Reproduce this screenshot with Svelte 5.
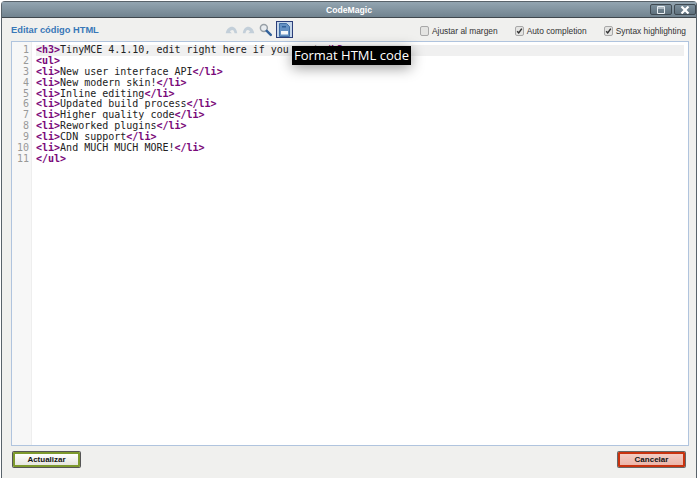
<script>
  const lines = [
    [['t', '<h3>'], ['x', 'TinyMCE 4.1.10, edit right here if you want'], ['t', '</h3>']],
    [['t', '<ul>']],
    [['t', '<li>'], ['x', 'New user interface API'], ['t', '</li>']],
    [['t', '<li>'], ['x', 'New modern skin!'], ['t', '</li>']],
    [['t', '<li>'], ['x', 'Inline editing'], ['t', '</li>']],
    [['t', '<li>'], ['x', 'Updated build process'], ['t', '</li>']],
    [['t', '<li>'], ['x', 'Higher quality code'], ['t', '</li>']],
    [['t', '<li>'], ['x', 'Reworked plugins'], ['t', '</li>']],
    [['t', '<li>'], ['x', 'CDN support'], ['t', '</li>']],
    [['t', '<li>'], ['x', 'And MUCH MUCH MORE!'], ['t', '</li>']],
    [['t', '</ul>']]
  ];

  const options = [
    { label: 'Ajustar al margen', checked: false },
    { label: 'Auto completion', checked: true },
    { label: 'Syntax highlighting', checked: true }
  ];
</script>

<div class="window">
  <header class="titlebar">
    <span class="title">CodeMagic</span>
    <div class="controls">
      <button class="ctl" aria-label="Maximize">
        <svg width="8" height="8" viewBox="0 0 8 8"><path d="M0.500 0.500h7v7h-7z M0.500 2h7" fill="none" stroke="#e8eef2" stroke-width="1"/></svg>
      </button>
      <button class="ctl" aria-label="Close">
        <svg width="10" height="8" viewBox="0 0 10 8"><path d="M1.500 0.500l7 7M8.500 0.500l-7 7" fill="none" stroke="#fff" stroke-width="2.200"/></svg>
      </button>
    </div>
  </header>

  <div class="body">
    <div class="toolbar">
      <h2>Editar código HTML</h2>
      <div class="icons">
        <svg width="13" height="11" viewBox="0 0 17 14"><path d="M1 12C2 6 6 3 10 3.500C13 4 15.500 7 16 12L12.500 12C12 9 11 7.500 9.500 7.500C8 7.500 7 8.500 6.500 9.500L9 12Z" fill="#c3cfd9"/></svg>
        <svg width="13" height="11" viewBox="0 0 17 14"><path d="M16 12C15 6 11 3 7 3.500C4 4 1.500 7 1 12L4.500 12C5 9 6 7.500 7.500 7.500C9 7.500 10 8.500 10.500 9.500L8 12Z" fill="#c3cfd9"/></svg>
        <svg width="13" height="14" viewBox="0 0 16 17">
          <circle cx="6" cy="6" r="4.300" fill="#e8ecef" stroke="#98a0a6" stroke-width="1.800"/>
          <path d="M9.500 9.500L14.500 14.500" stroke="#34639c" stroke-width="3" stroke-linecap="round"/>
        </svg>
        <span class="active">
          <svg width="11" height="14" viewBox="0 0 11 14">
            <path d="M0.500 0.500H7.500L10.500 3.500V13.500H0.500Z" fill="#6490c2" stroke="#3f6ea5"/>
            <rect x="2" y="8" width="7" height="3.500" fill="#f4f7fa"/>
            <rect x="3" y="3" width="4" height="1.500" fill="#2f5f98"/>
          </svg>
        </span>
      </div>
      <div class="options">
        {#each options as opt}
          <label class="opt">
            <span class="box">
              {#if opt.checked}
                <svg width="8" height="8" viewBox="0 0 9 9"><path d="M1.500 4.800L3.500 7L7.500 1.500" fill="none" stroke="#333" stroke-width="1.900"/></svg>
              {/if}
            </span>
            {opt.label}
          </label>
        {/each}
      </div>
    </div>

    <div class="editor">
      <div class="gutter">
        {#each lines as _, i}
          <div class="num">{i + 1}</div>
        {/each}
      </div>
      <div class="code">
        {#each lines as line, i}
          <div class="line" class:current={i === 0}>
            {#each line as part}
              <span class={part[0]}>{part[1]}</span>
            {/each}
          </div>
        {/each}
      </div>
      <div class="tooltip">Format HTML code</div>
    </div>

    <div class="footer">
      <button class="btn ok">Actualizar</button>
      <button class="btn cancel">Cancelar</button>
    </div>
  </div>
</div>

<style>
  :global(body) {
    margin: 0;
    background: #fff;
    overflow: hidden;
  }

  .window {
    box-sizing: border-box;
    width: 696px;
    height: 478px;
    margin: 1px 0 0 1px;
    display: flex;
    flex-direction: column;
    font-family: 'Liberation Sans', Arial, sans-serif;
    border: 1px solid #59636b;
    border-bottom: none;
    border-radius: 4px 4px 0 0;
  }

  .titlebar {
    height: 15px;
    flex: none;
    display: flex;
    align-items: center;
    justify-content: center;
    position: relative;
    background: linear-gradient(#93a5b1, #71838f);
    border-bottom: 1px solid #3f474d;
  }

  .title {
    color: #fff;
    font-size: 8.600px;
    font-weight: bold;
  }

  .controls {
    position: absolute;
    right: 0;
    top: 2px;
    display: flex;
    gap: 2px;
  }

  .ctl {
    box-sizing: border-box;
    width: 22px;
    height: 11px;
    padding: 0;
    display: flex;
    align-items: center;
    justify-content: center;
    background: linear-gradient(#7b8e9b, #5f717d);
    border: 1px solid #3f4a52;
    border-radius: 2px;
  }

  .body {
    flex: 1;
    display: flex;
    flex-direction: column;
    background: #f0f0ee;
    padding: 0 7px 0 9px;
    min-height: 0;
  }

  .toolbar {
    height: 23px;
    flex: none;
    display: flex;
    align-items: center;
    position: relative;
  }

  h2 {
    margin: 0;
    width: 214px;
    font-size: 9.300px;
    font-weight: bold;
    color: #3a78b8;
  }

  .icons {
    display: flex;
    align-items: center;
    gap: 4px;
  }

  .active {
    display: flex;
    align-items: center;
    justify-content: center;
    box-sizing: border-box;
    width: 17px;
    height: 17px;
    background: #c6d7ea;
    border: 1px solid #2c3f7a;
  }

  .options {
    margin-left: auto;
    display: flex;
    gap: 17px;
    margin-right: 3px;
    padding-top: 2px;
  }

  .opt {
    display: flex;
    align-items: center;
    gap: 3px;
    font-size: 8.400px;
    color: #333;
  }

  .box {
    box-sizing: border-box;
    width: 9px;
    height: 10px;
    display: flex;
    align-items: center;
    justify-content: center;
    background: #e4e4e2;
    border: 1px solid #a8a8a8;
    border-radius: 2px;
  }

  .editor {
    flex: 1;
    min-height: 0;
    position: relative;
    display: flex;
    background: #fff;
    border: 1px solid #b0c4de;
  }

  .gutter {
    width: 19px;
    flex: none;
    padding-top: 3px;
    background: #f7f7f7;
    border-right: 1px solid #eee;
  }

  .num {
    height: 10.900px;
    text-align: right;
    padding-right: 2px;
    font: 10px/10.900px 'DejaVu Sans Mono', monospace;
    color: #999;
  }

  .code {
    flex: 1;
    padding: 3px 4px 0 4px;
    font: 10px/10.900px 'DejaVu Sans Mono', monospace;
    color: #222;
  }

  .line {
    height: 10.900px;
    white-space: pre;
  }

  .current {
    background: #f0f0f0;
  }

  .t {
    color: #7a0a7a;
    font-weight: bold;
  }

  .tooltip {
    position: absolute;
    left: 280px;
    top: 4px;
    width: 119px;
    height: 19px;
    line-height: 19px;
    text-align: center;
    background: #000;
    color: #fff;
    font-family: 'Open Sans', sans-serif;
    font-size: 13px;
    box-shadow: 0 3px 14px rgba(0, 0, 0, 0.4);
  }

  .footer {
    height: 27px;
    flex: none;
    display: flex;
    justify-content: space-between;
    align-items: flex-start;
    padding: 6px 4px 0 2px;
  }

  .btn {
    box-sizing: border-box;
    width: 67px;
    height: 15px;
    padding: 0;
    font-family: 'Liberation Sans', Arial, sans-serif;
    font-size: 8px;
    font-weight: bold;
    color: #111;
    border-radius: 1px;
  }

  .ok {
    background: linear-gradient(#fff, #e6e6df);
    border: 2px solid #7e9a2e;
    box-shadow: 0 0 0 1px #555;
  }

  .cancel {
    background: linear-gradient(#f3cdc4, #ecb5a9);
    border: 2px solid #c9330f;
    box-shadow: 0 0 0 1px #666;
  }
</style>
